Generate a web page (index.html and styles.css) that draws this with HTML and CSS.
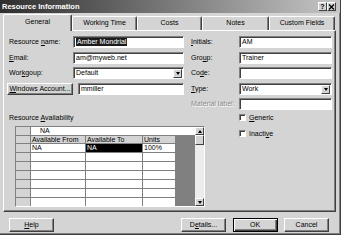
FILE: index.html
```html
<!DOCTYPE html>
<html lang="en">
<head>
    <meta charset="UTF-8">
    <title>Resource Information</title>
    <link rel="stylesheet" href="styles.css">
</head>
<body>
<div class="window">
    <!-- caption -->
    <div class="titlebar">
        <span class="title">Resource Information</span>
        <div class="caption-btns">
            <span class="cbtn">?</span>
            <span class="cbtn">
                <svg width="7" height="6" viewBox="0 0 7 6"><path d="M1 0.5 L6 5.5 M6 0.5 L1 5.5" stroke="#000" stroke-width="1.3"/></svg>
            </span>
        </div>
    </div>

    <div class="body">
        <!-- tabs -->
        <div class="tabs">
            <div class="tab active" style="width: 69px">General</div>
            <div class="tab" style="width: 65px">Working Time</div>
            <div class="tab" style="width: 65px">Costs</div>
            <div class="tab" style="width: 67px">Notes</div>
            <div class="tab" style="width: 66px">Custom Fields</div>
        </div>

        <div class="panel">
            <div class="fields">
                <label class="lbl">Resource <u>n</u>ame:</label>
                <div class="input"><span class="sel">Amber Mondrial</span></div>
                <label class="lbl right-lbl"><u>I</u>nitials:</label>
                <div class="input right-in">AM</div>

                <label class="lbl"><u>E</u>mail:</label>
                <div class="input">am@myweb.net</div>
                <label class="lbl right-lbl">Gro<u>u</u>p:</label>
                <div class="input right-in">Trainer</div>

                <label class="lbl">Wor<u>k</u>goup:</label>
                <div class="input combo">Default<span class="drop"><i></i></span></div>
                <label class="lbl right-lbl">Co<u>d</u>e:</label>
                <div class="input right-in"></div>

                <div class="account">
                    <span class="btn acct-btn"><u>W</u>indows Account...</span>
                    <div class="input">mmiller</div>
                </div>
                <label class="lbl right-lbl"><u>T</u>ype:</label>
                <div class="input combo right-in">Work<span class="drop"><i></i></span></div>

                <label class="lbl right-lbl disabled">Material label:</label>
                <div class="input right-in"></div>
            </div>

            <div class="lower">
                <div class="avail">
                    <div class="lbl">Resource <u>A</u>vailability</div>
                    <div class="sheet">
                        <div class="cells">
                            <div class="rh"></div>
                            <div class="editrow">NA</div>

                            <div class="rh"></div>
                            <div class="hd">Available From</div>
                            <div class="hd">Available To</div>
                            <div class="hd">Units</div>
                            <div class="dark"></div>

                            <div class="rh"></div>
                            <div class="c">NA</div>
                            <div class="c picked">NA</div>
                            <div class="c">100%</div>

                            <div class="rh"></div><div class="c"></div><div class="c"></div><div class="c"></div>
                            <div class="rh"></div><div class="c"></div><div class="c"></div><div class="c"></div>
                            <div class="rh"></div><div class="c"></div><div class="c"></div><div class="c"></div>
                            <div class="rh"></div><div class="c"></div><div class="c"></div><div class="c"></div>
                            <div class="rh"></div><div class="c"></div><div class="c"></div><div class="c"></div>
                            <div class="rh"></div><div class="c"></div><div class="c"></div><div class="c"></div>
                        </div>
                        <div class="vscroll">
                            <span class="sbtn"><i class="up"></i></span>
                            <span class="thumb"></span>
                            <span class="track"></span>
                            <span class="sbtn"><i></i></span>
                        </div>
                    </div>
                </div>
                <div class="checks">
                    <label class="check"><span class="box"></span><span><u>G</u>eneric</span></label>
                    <label class="check"><span class="box"></span><span>Inacti<u>v</u>e</span></label>
                </div>
            </div>
        </div>

        <div class="buttons">
            <span class="btn"><u>H</u>elp</span>
            <span class="spacer"></span>
            <span class="btn">D<u>e</u>tails...</span>
            <span class="btn default">OK</span>
            <span class="btn">Cancel</span>
        </div>
    </div>
</div>
</body>
</html>
```

FILE: styles.css
```css
* {
    box-sizing: border-box;
}

body {
    margin: 0;
    background: #ffffff;
    font-family: "Liberation Sans", Arial, sans-serif;
    font-size: 7px;
    color: #000;
}

u {
    text-decoration-thickness: 1px;
    text-underline-offset: 1px;
}

.window {
    width: 341px;
    height: 235px;
    background: #d4d4d4;
    border-right: 1px solid #404040;
    border-bottom: 1px solid #404040;
    box-shadow: inset -1px -1px #808080;
}

/* caption */
.titlebar {
    height: 13px;
    display: flex;
    align-items: center;
    justify-content: space-between;
    padding: 0 4px 0 2px;
    background: linear-gradient(to right, #2e2e2e, #c6c6c6);
}

.title {
    color: #fff;
    font-weight: bold;
    font-size: 7.5px;
}

.caption-btns {
    display: flex;
}

.cbtn {
    width: 9px;
    height: 9px;
    display: flex;
    align-items: center;
    justify-content: center;
    background: #d4d4d4;
    border: 1px solid;
    border-color: #fff #404040 #404040 #fff;
    font-weight: bold;
    font-size: 7px;
    line-height: 1;
}

.body {
    padding: 0 4px 0 3px;
}

/* tabs */
.tabs {
    display: flex;
    align-items: flex-end;
    height: 17px;
}

.tab {
    height: 14px;
    line-height: 12px;
    text-align: center;
    border-top: 1px solid #fff;
    border-left: 1px solid #fff;
    border-right: 1px solid #404040;
    box-shadow: inset -1px 0 #808080;
    border-radius: 2px 2px 0 0;
}

.tab.active {
    height: 17px;
    line-height: 14px;
    margin-bottom: -1px;
    background: #d4d4d4;
    position: relative;
    z-index: 1;
}

.panel {
    height: 182px;
    border: 1px solid;
    border-color: #fff #404040 #404040 #fff;
    box-shadow: inset -1px -1px #808080;
    padding: 5px 2px 0 5px;
}

/* form fields */
.fields {
    display: grid;
    grid-template-columns: 64px 111px 7px 48px 93px;
    grid-template-rows: repeat(5, 12px);
    row-gap: 3.5px;
}

.lbl {
    display: block;
    line-height: 12px;
    white-space: nowrap;
    grid-column: 1;
}

.right-lbl {
    grid-column: 4;
}

.right-in {
    grid-column: 5;
}

.disabled {
    color: #8a8a8a;
    text-shadow: 1px 1px #fff;
}

.input {
    background: #fff;
    border: 1px solid;
    border-color: #808080 #fff #fff #808080;
    box-shadow: inset 1px 1px #404040;
    padding-left: 2px;
    line-height: 10px;
    white-space: nowrap;
    position: relative;
}

.sel {
    background: #1c1c1c;
    color: #fff;
    padding: 0 1px;
    display: inline-block;
    line-height: 8px;
}

.drop {
    position: absolute;
    right: 1px;
    top: 1px;
    bottom: 0;
    width: 9px;
    background: #d4d4d4;
    border: 1px solid;
    border-color: #fff #404040 #404040 #fff;
    display: flex;
    align-items: center;
    justify-content: center;
}

.drop i,
.sbtn i {
    width: 0;
    height: 0;
    border-left: 2.5px solid transparent;
    border-right: 2.5px solid transparent;
    border-top: 3px solid #000;
}

.sbtn i.up {
    border-top: none;
    border-bottom: 3px solid #000;
}

.account {
    grid-column: 1 / 3;
    display: flex;
    gap: 5px;
    margin-left: -2px;
}

.account .input {
    flex: 1;
}

.btn {
    display: block;
    text-align: center;
    background: #d4d4d4;
    border: 1px solid;
    border-color: #fff #404040 #404040 #fff;
    box-shadow: inset -1px -1px #808080;
    white-space: nowrap;
}

.acct-btn {
    width: 66px;
    line-height: 10px;
}

/* lower section */
.lower {
    display: flex;
    margin-top: 3px;
}

.avail {
    width: 196px;
}

.avail .lbl {
    line-height: 9px;
}

.sheet {
    margin: 4px 0 0 6px;
    width: 190px;
    height: 81px;
    display: flex;
    border: 1px solid;
    border-color: #808080 #fff #fff #808080;
    background: #808080;
}

.cells {
    display: grid;
    grid-template-columns: 15px 55px 57px 33px 19px;
    grid-template-rows: 9px 8px repeat(7, 9px);
    flex: 1;
    overflow: hidden;
    background: #fff;
}

.rh {
    grid-column: 1;
    background: #d4d4d4;
    border-right: 1px solid #808080;
    border-bottom: 1px solid #808080;
}

.editrow {
    grid-column: 2 / 6;
    background: #fff;
    border-bottom: 1px solid #808080;
    padding-left: 9px;
    line-height: 8px;
}

.hd {
    background: #d4d4d4;
    border-right: 1px solid #808080;
    border-bottom: 1px solid #808080;
    padding-left: 1px;
    line-height: 8px;
    white-space: nowrap;
}

.dark {
    grid-column: 5;
    grid-row: 2 / -1;
    background: #808080;
}

.c {
    border-right: 1px solid #808080;
    border-bottom: 1px solid #808080;
    padding-left: 1px;
    line-height: 8px;
}

.c.picked {
    background: #000;
    color: #fff;
}

.vscroll {
    width: 9px;
    display: flex;
    flex-direction: column;
    background: #ececec;
}

.sbtn,
.thumb {
    height: 8px;
    background: #d4d4d4;
    border: 1px solid;
    border-color: #fff #404040 #404040 #fff;
    display: flex;
    align-items: center;
    justify-content: center;
}

.thumb {
    height: 10px;
}

.track {
    flex: 1;
}

.checks {
    margin-left: 34px;
    display: flex;
    flex-direction: column;
    gap: 7px;
}

.check {
    display: flex;
    align-items: center;
    gap: 3px;
    height: 9px;
    white-space: nowrap;
}

.box {
    width: 7px;
    height: 7px;
    background: #fff;
    border: 1px solid;
    border-color: #808080 #fff #fff #808080;
    box-shadow: inset 1px 1px #404040;
}

/* dialog buttons */
.buttons {
    display: flex;
    gap: 6.5px;
    margin-top: 6px;
    padding: 0 7px 0 6px;
    height: 14px;
}

.buttons .btn {
    width: 45px;
    line-height: 12px;
}

.spacer {
    flex: 1;
}

.btn.default {
    border: 1px solid #000;
    box-shadow: inset 1px 1px #fff, inset -1px -1px #404040, inset -2px -2px #808080;
}
```
